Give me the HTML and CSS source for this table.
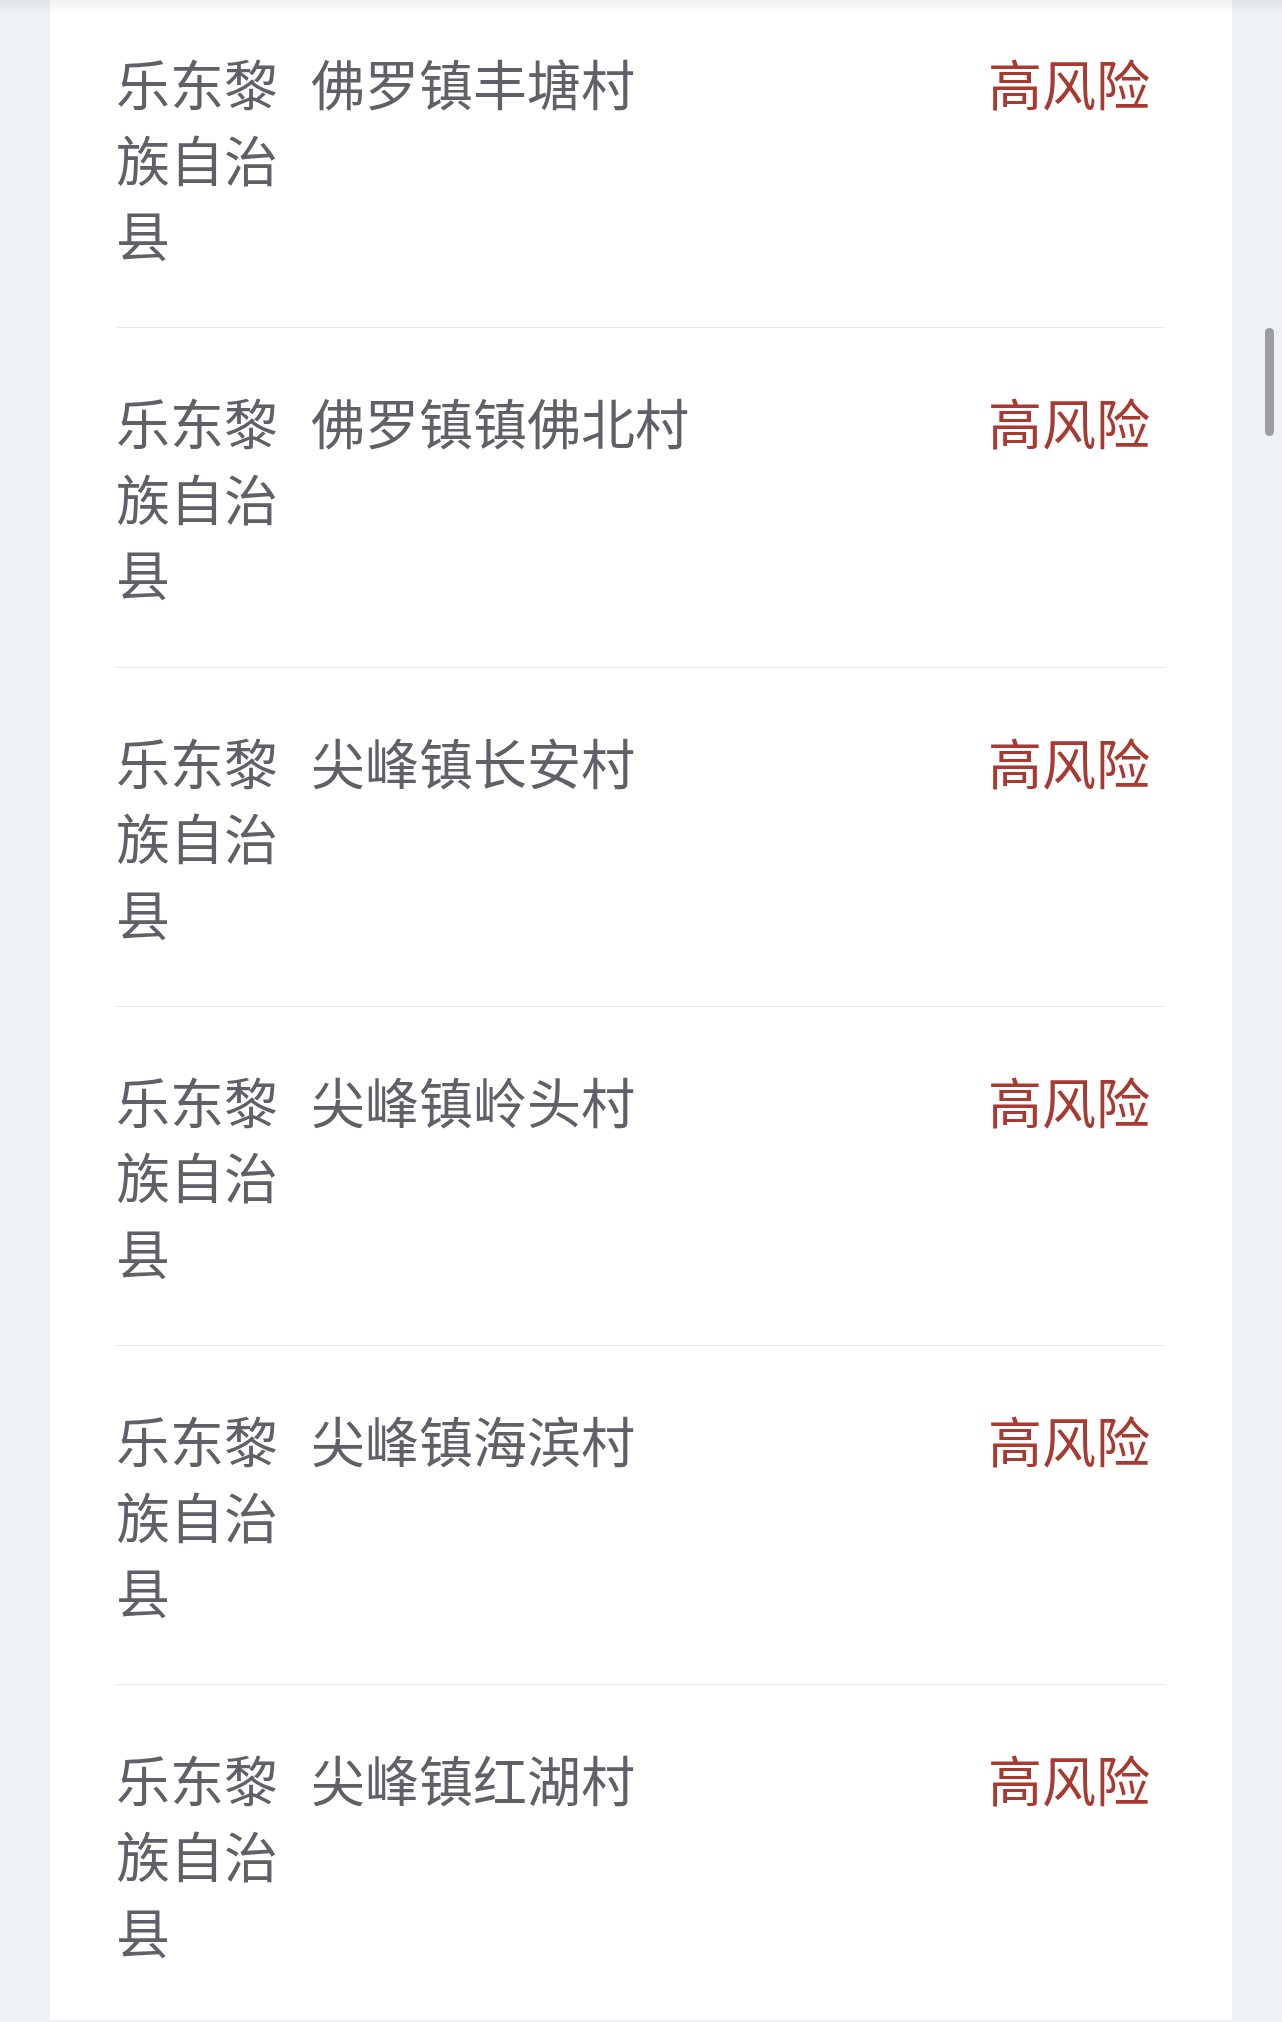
FILE: index.html
```html
<!DOCTYPE html>
<html lang="zh-CN">
<head>
<meta charset="utf-8">
<title>风险地区</title>
<link rel="stylesheet" href="styles.css">
</head>
<body>
<div class="top-shade"></div>
<main class="page">
  <section class="card">
    <div class="row">
      <div class="cell county">乐东黎族自治县</div>
      <div class="cell place">佛罗镇丰塘村</div>
      <div class="cell risk">高风险</div>
    </div>
    <div class="row">
      <div class="cell county">乐东黎族自治县</div>
      <div class="cell place">佛罗镇镇佛北村</div>
      <div class="cell risk">高风险</div>
    </div>
    <div class="row">
      <div class="cell county">乐东黎族自治县</div>
      <div class="cell place">尖峰镇长安村</div>
      <div class="cell risk">高风险</div>
    </div>
    <div class="row">
      <div class="cell county">乐东黎族自治县</div>
      <div class="cell place">尖峰镇岭头村</div>
      <div class="cell risk">高风险</div>
    </div>
    <div class="row">
      <div class="cell county">乐东黎族自治县</div>
      <div class="cell place">尖峰镇海滨村</div>
      <div class="cell risk">高风险</div>
    </div>
    <div class="row last">
      <div class="cell county">乐东黎族自治县</div>
      <div class="cell place">尖峰镇红湖村</div>
      <div class="cell risk">高风险</div>
    </div>
  </section>
</main>
<div class="scroll-thumb"></div>
</body>
</html>
```
FILE: styles.css
```css
html, body {
  margin: 0;
  padding: 0;
  height: 2022px;
  overflow: hidden;
  background: #eef1f5;
}

body {
  font-family: "Noto Sans CJK SC", "Noto Sans", sans-serif;
  color: #606168;
}

.page {
  padding: 0 50px;
  height: 2020px;
  overflow: hidden;
}

.card {
  background: #ffffff;
  margin-top: -11px;
  padding: 0 67px 0 66px;
  height: 2031px;
  overflow: hidden;
}

.row {
  display: grid;
  grid-template-columns: 162px 1fr auto;
  column-gap: 33px;
  padding: 56px 0 55.5px;
  border-bottom: 1px solid #e8e9ec;
  font-size: 54px;
  line-height: 1.4;
}

.row.last {
  border-bottom: none;
}

.cell {
  min-width: 0;
}

.county {
  word-break: break-all;
}

.risk {
  color: #a93a31;
  padding-right: 15px;
  white-space: nowrap;
}

.top-shade {
  position: fixed;
  left: 0;
  right: 0;
  top: 0;
  height: 14px;
  background: linear-gradient(to bottom, rgba(0, 0, 0, 0.06), rgba(0, 0, 0, 0));
  z-index: 2;
}

.scroll-thumb {
  position: fixed;
  left: 1265px;
  top: 328px;
  width: 9px;
  height: 108px;
  border-radius: 5px;
  background: #9c9d9f;
  z-index: 3;
}
```
